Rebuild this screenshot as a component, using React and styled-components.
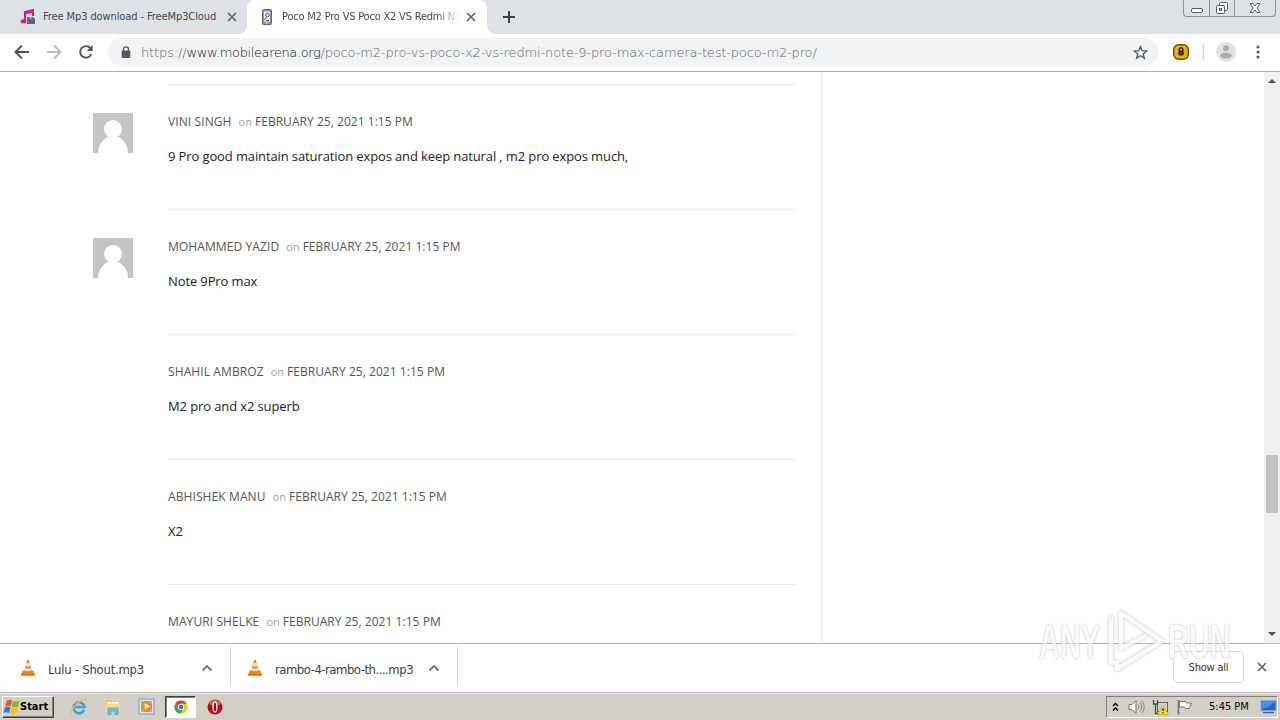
import React from "react";
import styled, { createGlobalStyle, css } from "styled-components";

const comments = [
  { name: "VINI SINGH", text: "9 Pro good maintain saturation expos and keep natural , m2 pro expos much,", avatar: true },
  { name: "MOHAMMED YAZID", text: "Note 9Pro max", avatar: true },
  { name: "SHAHIL AMBROZ", text: "M2 pro and x2 superb" },
  { name: "ABHISHEK MANU", text: "X2" },
  { name: "MAYURI SHELKE", text: "" },
];

const CloseIcon = ({ size = 10, color = "#5f6368" }) => (
  <svg width={size} height={size} viewBox="0 0 10 10">
    <path d="M1 1l8 8M9 1L1 9" stroke={color} strokeWidth="1.7" />
  </svg>
);

const MusicIcon = () => (
  <svg width="16" height="16" viewBox="0 0 16 16">
    <path d="M5 12V3l8-2v6" fill="none" stroke="#e5137d" strokeWidth="2" />
    <path d="M5 3l8-2v2.500l-8 2z" fill="#e5137d" />
    <ellipse cx="3.500" cy="12.300" rx="2.800" ry="2" fill="#e5137d" />
    <path d="M7 8h6l2 2v5H7z" fill="#5d6383" />
    <path d="M9 8h3v2H9z" fill="#9398ad" />
  </svg>
);

const PhoneIcon = () => (
  <svg width="16" height="16" viewBox="0 0 16 16">
    <rect x="3.500" y=".5" width="9" height="15" rx="1" fill="#8797a6" stroke="#5a6875" />
    <rect x="5" y="2.500" width="6" height="10" fill="#e6eff5" />
    <circle cx="8.500" cy="6" r="1.800" fill="none" stroke="#54687b" />
    <path d="M5.500 11l2-3M7 11.500h3" stroke="#54687b" />
    <path d="M6.500 14h3" stroke="#dbe7f0" />
  </svg>
);

const WindowsFlag = () => (
  <svg width="17" height="16" viewBox="0 0 17 16">
    <path d="M3.800 1.500q3-1.500 5.500 0L7.700 7.300q-2.800-1.300-5.500 0z" fill="#ee5a24" />
    <path d="M10 2q3 1.300 6.500-.3L15 7.500q-3.200 1.200-6.300 0z" fill="#7cb82f" />
    <path d="M2 8.200q2.800-1.300 5.500 0L6 14q-2.800-1.300-5.500 0z" fill="#2f7fd6" />
    <path d="M8.400 8.500q3.200 1.200 6.200 0L13 14.300q-3.200 1.300-6.200 0z" fill="#fbbd17" />
  </svg>
);

const ConeIcon = () => (
  <svg width="16" height="17" viewBox="0 0 16 17">
    <path d="M2.500 11.500h11l1.500 5H1z" fill="#f28a10" />
    <path d="M1 15.300h14v1.200H1z" fill="#c96404" />
    <path d="M7.200 1h1.600l3.400 12q-4.200 1.800-8.400 0z" fill="#f0800c" />
    <path d="M6.400 4h3.200l.9 3q-2.500 1-5 0zM5 9q3 1.200 6 0l.8 2.500q-3.800 1.500-7.600 0z" fill="#e3e3e3" />
  </svg>
);

const IeIcon = () => (
  <svg width="18" height="18" viewBox="0 0 18 18">
    <path d="M14.200 11.800A5.500 5.500 0 1 1 14.500 9H5" fill="none" stroke="#3c9fe0" strokeWidth="2.600" />
    <path d="M2 15.500C-.5 12 10 1 15.500 1.500c2 .3 1.200 3 .5 4" fill="none" stroke="#e8bd3d" strokeWidth="1.300" />
  </svg>
);

const FolderIcon = () => (
  <svg width="18" height="18" viewBox="0 0 18 18">
    <path d="M2 2h5l1 1.500h7V14H2z" fill="#e8c760" />
    <path d="M3 4h12v3H3z" fill="#fbf4c8" />
    <path d="M2 6h14v8H2z" fill="#f3db85" />
    <path d="M4 16.500V10h10v6.500h-3V13H7v3.500z" fill="#74bde4" stroke="#4a98c5" strokeWidth=".7" />
  </svg>
);

const MediaIcon = () => (
  <svg width="17" height="17" viewBox="0 0 17 17">
    <rect x="1" y="1" width="15" height="15" fill="#d7e7f5" stroke="#6c9dcb" />
    <rect x="3" y="3" width="11" height="11" fill="#8cb7de" />
    <circle cx="8.500" cy="8.500" r="5.500" fill="#f58a12" />
    <path d="M6.800 5.300l5 3.200-5 3.200z" fill="#fff" />
  </svg>
);

const ChromeIcon = () => (
  <svg width="14" height="14" viewBox="0 0 16 16">
    <circle cx="8" cy="8" r="7.500" fill="#fbc31b" />
    <path d="M1.500 4.250A7.500 7.500 0 0 1 14.500 4.250H8L5 9.500z" fill="#e23e31" />
    <path d="M1.500 4.250A7.500 7.500 0 0 0 8 15.500l3.200-5.800L5 9.700z" fill="#35a351" />
    <circle cx="8" cy="8" r="3.600" fill="#fff" />
    <circle cx="8" cy="8" r="2.800" fill="#3f79d8" />
  </svg>
);

const OperaIcon = () => (
  <svg width="16" height="16" viewBox="0 0 16 16">
    <circle cx="8" cy="8" r="7.500" fill="#b50d12" />
    <path d="M2 5a6.500 6.500 0 0 1 12 0q-6 3-12 0" fill="#db6663" />
    <ellipse cx="8" cy="8" rx="2.600" ry="5.700" fill="#fff" />
    <ellipse cx="8" cy="8" rx="1.200" ry="4.500" fill="#8c0a0c" />
  </svg>
);

function Tabs() {
  return (
    <TabStrip>
      <Tab>
        <MusicIcon />
        <TabTitle>Free Mp3 download - FreeMp3Cloud</TabTitle>
        <CloseIcon />
      </Tab>
      <Tab $active>
        <PhoneIcon />
        <TabTitle $active>Poco M2 Pro VS Poco X2 VS Redmi Note</TabTitle>
        <CloseIcon />
      </Tab>
      <NewTab>
        <svg width="12" height="12" viewBox="0 0 12 12">
          <path d="M6 0v12M0 6h12" stroke="#3c4043" strokeWidth="2" />
        </svg>
      </NewTab>
      <WindowButtons>
        <WindowButton $w={25}>
          <svg width="14" height="16" viewBox="0 0 14 16">
            <rect x="1.500" y="8.500" width="11" height="4" rx="1.500" fill="#fff" stroke="#53565c" />
          </svg>
        </WindowButton>
        <WindowButton $w={25}>
          <svg width="14" height="16" viewBox="0 0 14 16">
            <rect x="4.500" y="2.500" width="8" height="8" rx="1" fill="#fff" stroke="#53565c" />
            <rect x="1.500" y="5.500" width="8" height="8" rx="1" fill="#fff" stroke="#53565c" />
            <rect x="4.500" y="8.500" width="2" height="2" fill="none" stroke="#53565c" />
          </svg>
        </WindowButton>
        <WindowButton $w={41}>
          <svg width="14" height="16" viewBox="0 0 14 16">
            <path d="M2 3.500h3l2 2.500 2-2.500h3L9 8l3 4.500H9L7 10l-2 2.500H2L5 8z" fill="#fff" stroke="#53565c" />
          </svg>
        </WindowButton>
      </WindowButtons>
    </TabStrip>
  );
}

function AddressBar() {
  return (
    <Toolbar>
      <NavButtons>
        <svg width="16" height="16" viewBox="0 0 16 16">
          <path d="M15 8H2M8 1.500L1.500 8 8 14.500" fill="none" stroke="#505357" strokeWidth="1.900" />
        </svg>
        <svg width="16" height="16" viewBox="0 0 16 16">
          <path d="M1 8h13M8 1.500L14.500 8 8 14.500" fill="none" stroke="#b9bbbd" strokeWidth="1.900" />
        </svg>
        <svg width="16" height="16" viewBox="0 0 16 16">
          <path d="M13.300 10.200a5.800 5.800 0 1 1-1-6.200l1 1.200" fill="none" stroke="#505357" strokeWidth="1.900" />
          <path d="M14.700 1v6H8.700z" fill="#505357" />
        </svg>
      </NavButtons>
      <UrlField>
        <svg width="10" height="13" viewBox="0 0 10 13">
          <path d="M2.500 5V3.300a2.500 2.500 0 0 1 5 0V5" fill="none" stroke="#54575b" strokeWidth="1.300" />
          <rect x=".7" y="4.500" width="8.600" height="7.500" rx="1" fill="#54575b" />
        </svg>
        <Url>
          https://<Host>www.mobilearena.org</Host>
          /poco-m2-pro-vs-poco-x2-vs-redmi-note-9-pro-max-camera-test-poco-m2-pro/
        </Url>
        <svg width="15" height="15" viewBox="0 0 15 15">
          <path d="M7.500 1.500l1.700 4.200 4.500.3-3.500 2.900 1.200 4.400-3.900-2.500-3.900 2.500 1.200-4.400L1.300 6l4.500-.3z" fill="none" stroke="#54575b" strokeWidth="1.300" />
        </svg>
      </UrlField>
      <Extension>
        <svg width="16" height="16" viewBox="0 0 16 16">
          <rect x=".7" y=".7" width="14.600" height="14.600" rx="5" fill="#edb50c" stroke="#684b12" strokeWidth="1.400" />
          <path d="M6.200 7V5.500a1.800 1.800 0 0 1 3.600 0V7" fill="none" stroke="#33220c" strokeWidth="1.400" />
          <rect x="5.300" y="6.500" width="5.400" height="5" rx="1.500" fill="#33220c" />
          <path d="M8 8v2" stroke="#d14a20" />
        </svg>
      </Extension>
      <Profile>
        <svg width="20" height="20" viewBox="0 0 20 20">
          <circle cx="10" cy="10" r="10" fill="#e0e1e2" />
          <circle cx="10" cy="6.200" r="3" fill="#a9abad" />
          <ellipse cx="10" cy="13.600" rx="5.800" ry="2.900" fill="#a9abad" />
        </svg>
      </Profile>
      <svg width="4" height="14" viewBox="0 0 4 14">
        <circle cx="2" cy="2" r="1.500" fill="#505357" />
        <circle cx="2" cy="7" r="1.500" fill="#505357" />
        <circle cx="2" cy="12" r="1.500" fill="#505357" />
      </svg>
    </Toolbar>
  );
}

function Comment({ name, text, avatar }) {
  return (
    <CommentRow>
      <AvatarCell>
        {avatar && (
          <svg width="40" height="40" viewBox="0 0 40 40">
            <rect width="40" height="40" fill="#c4c4c4" />
            <circle cx="20" cy="16" r="9" fill="#fff" />
            <path d="M5 40q0-10 9-16h12q9 6 9 16z" fill="#fff" />
          </svg>
        )}
      </AvatarCell>
      <CommentBody>
        <Meta>
          <Author>{name}</Author>
          <On>on</On>
          <Posted>FEBRUARY 25, 2021 1:15 PM</Posted>
        </Meta>
        <CommentText>{text}</CommentText>
      </CommentBody>
    </CommentRow>
  );
}

function Download({ name, first }) {
  return (
    <DownloadItem $first={first}>
      <ConeIcon />
      <FileName $first={first}>{name}</FileName>
      <svg width="12" height="8" viewBox="0 0 12 8">
        <path d="M1.500 6.500L6 2l4.500 4.500" fill="none" stroke="#707276" strokeWidth="1.800" />
      </svg>
    </DownloadItem>
  );
}

function Taskbar() {
  return (
    <Bar>
      <StartButton>
        <WindowsFlag />
        Start
      </StartButton>
      <QuickItem><IeIcon /></QuickItem>
      <QuickItem><FolderIcon /></QuickItem>
      <QuickItem><MediaIcon /></QuickItem>
      <QuickItem $pressed><ChromeIcon /></QuickItem>
      <QuickItem><OperaIcon /></QuickItem>
      <Tray>
        <svg width="7" height="10" viewBox="0 0 7 10">
          <path d="M1 4l2.500-2.500L6 4M1 8.500L3.500 6 6 8.500" fill="none" stroke="#000" strokeWidth="1.400" />
        </svg>
        <TrayIcons>
          <svg width="17" height="16" viewBox="0 0 17 16">
            <path d="M1 5.500h3l4-4v13l-4-4H1z" fill="#f9f9f9" stroke="#737373" />
            <path d="M10 5.500q2 2.500 0 5M12 3.500q3.500 4.500 0 9M14 2q4.500 6 0 12" fill="none" stroke="#858585" />
          </svg>
          <svg width="17" height="16" viewBox="0 0 17 16">
            <rect x="5.500" y="3.500" width="10" height="9" fill="#c9cfd2" stroke="#606060" />
            <path d="M1.500 1v4h4V1M3.500 5v9.500H7" fill="none" stroke="#484848" strokeWidth="1.300" />
            <path d="M11 6l5.500 9.500h-11z" fill="#ffd629" stroke="#c19b0d" strokeWidth=".6" />
            <path d="M11 9v3M11 13v1.300" stroke="#222" strokeWidth="1.200" />
          </svg>
          <svg width="17" height="16" viewBox="0 0 17 16">
            <path d="M2.500 1v14.500" stroke="#777" strokeWidth="1.800" />
            <path d="M3.500 2.500h6l1 1.500h5l-2 5.500H9.500l-1-1.500h-5z" fill="#fafafa" stroke="#777" />
          </svg>
        </TrayIcons>
        <Clock>5:45 PM</Clock>
        <svg width="17" height="15" viewBox="0 0 17 15">
          <rect x="1" y="1.500" width="15" height="10" fill="#2467bd" stroke="#80a7d2" />
          <path d="M1.500 2h14L8 8 1.500 10z" fill="#4990dc" />
          <path d="M3 13.500h11" stroke="#315e96" strokeWidth="1.500" />
        </svg>
      </Tray>
    </Bar>
  );
}

function App() {
  return (
    <>
      <GlobalStyle />
      <Screen>
        <Tabs />
        <AddressBar />
        <Viewport>
          <Page>
            {comments.map((c) => (
              <Comment key={c.name} {...c} />
            ))}
          </Page>
          <Sidebar />
          <Scrollbar>
            <Arrow viewBox="0 0 8 4"><path d="M0 4l4-4 4 4z" fill="#505050" /></Arrow>
            <Thumb />
            <Arrow viewBox="0 0 8 4"><path d="M0 0l4 4 4-4z" fill="#505050" /></Arrow>
          </Scrollbar>
        </Viewport>
        <Shelf>
          <Download name="Lulu - Shout.mp3" first />
          <Download name="rambo-4-rambo-th....mp3" />
          <ShowAll>Show all</ShowAll>
          <CloseIcon />
        </Shelf>
        <Taskbar />
        <Watermark>
          <MarkText $w={63}>ANY</MarkText>
          <Play width="60" height="66" viewBox="0 0 60 66">
            <path d="M6 8.500v46h6v6.500L57 33 16 5v35l26-13" fill="none" stroke="#fafafa" strokeWidth="4.500" strokeLinejoin="round" />
          </Play>
          <MarkText $w={64}>RUN</MarkText>
        </Watermark>
      </Screen>
    </>
  );
}

export default App;

const GlobalStyle = createGlobalStyle`
  * { box-sizing: border-box; }
  body { margin: 0; overflow: hidden; background: #fff; }
  svg { display: block; flex-shrink: 0; }
`;

const ui = css`
  font-family: "DejaVu Sans Condensed", "DejaVu Sans", sans-serif;
  font-stretch: condensed;
`;

const Screen = styled.div`
  position: relative;
  display: flex;
  flex-direction: column;
  width: 1280px;
  height: 720px;
  overflow: hidden;
  ${ui}
`;

const TabStrip = styled.div`
  display: flex;
  height: 34px;
  padding-left: 7px;
  background: #dee1e6;
`;

const Tab = styled.div`
  position: relative;
  display: flex;
  align-items: center;
  gap: 7px;
  width: 240px;
  height: 34px;
  padding: 0 ${(p) => (p.$active ? 11 : 10)}px 0 ${(p) => (p.$active ? 12 : 13)}px;
  border-radius: 8px 8px 0 0;
  background: ${(p) => (p.$active ? "#fff" : "transparent")};
  ${(p) =>
    p.$active &&
    css`
      &::before,
      &::after {
        content: "";
        position: absolute;
        bottom: 0;
        width: 8px;
        height: 8px;
      }
      &::before {
        left: -8px;
        background: radial-gradient(circle at 0 0, #dee1e6 7.5px, #fff 8px);
      }
      &::after {
        right: -8px;
        background: radial-gradient(circle at 100% 0, #dee1e6 7.5px, #fff 8px);
      }
    `}
`;

const TabTitle = styled.div`
  flex: 1;
  overflow: hidden;
  white-space: nowrap;
  font-size: 11px;
  line-height: 18px;
  letter-spacing: ${(p) => (p.$active ? -0.2 : -0.1)}px;
  color: #45484c;
  ${(p) => p.$active && "mask-image: linear-gradient(90deg, #000 88%, transparent);"}
`;

const NewTab = styled.div`
  display: flex;
  align-items: center;
  padding-left: 16px;
`;

const WindowButtons = styled.div`
  display: flex;
  height: 17px;
  margin-left: auto;
  margin-right: 4px;
  border: 1px solid #8b8f96;
  border-top: 0;
  border-radius: 0 0 4px 4px;
`;

const WindowButton = styled.div`
  display: flex;
  justify-content: center;
  width: ${(p) => p.$w}px;
  & + & {
    border-left: 1px solid #8b8f96;
  }
`;

const Toolbar = styled.div`
  display: flex;
  align-items: center;
  height: 38px;
  padding: 0 20px 1px 14px;
  border-bottom: 1px solid #adaeb0;
  background: #fff;
`;

const NavButtons = styled.div`
  display: flex;
  gap: 16px;
  width: 94px;
`;

const UrlField = styled.div`
  display: flex;
  align-items: center;
  width: 1051px;
  height: 28px;
  padding: 0 11px 0 13px;
  border-radius: 14px;
  background: #f1f3f4;
`;

const Url = styled.div`
  flex: 1;
  padding-left: 10px;
  white-space: nowrap;
  font-family: "DejaVu Sans", sans-serif;
  font-weight: 200;
  font-size: 13px;
  letter-spacing: -0.14px;
  color: #5f6368;
`;

const Host = styled.span`
  letter-spacing: -0.38px;
  color: #111;
`;

const Extension = styled.div`
  display: flex;
  align-items: center;
  width: 31px;
  height: 16px;
  margin-left: 14px;
  margin-right: 12px;
  border-right: 1px solid #d0d2d4;
`;

const Profile = styled.div`
  width: 40px;
`;

const Viewport = styled.div`
  display: flex;
  height: 571px;
  overflow: hidden;
  background: #fff;
`;

const Page = styled.div`
  width: 822px;
  padding: 12px 26px 0 93px;
  border-right: 1px solid #ebebeb;
`;

const Sidebar = styled.div`
  flex: 1;
`;

const CommentRow = styled.div`
  display: flex;
  height: 125px;
`;

const AvatarCell = styled.div`
  width: 75px;
  padding-top: 29px;
`;

const CommentBody = styled.div`
  flex: 1;
  padding-top: 27px;
  border-top: 1px solid #ececec;
  font-family: "Open Sans", "Noto Sans", sans-serif;
  font-stretch: normal;
`;

const Meta = styled.div`
  display: flex;
  align-items: baseline;
  white-space: nowrap;
  font-size: 12px;
  line-height: 20px;
  color: #555;
`;

const Author = styled.span`
  letter-spacing: 0.1px;
`;

const Posted = styled.span`
  letter-spacing: 0.04px;
`;

const On = styled.span`
  margin: 0 3px 0 7px;
  font-size: 11px;
  color: #a0a0a0;
`;

const CommentText = styled.div`
  padding-top: 14px;
  white-space: nowrap;
  font-size: 13px;
  line-height: 20px;
  letter-spacing: -0.115px;
  color: #222;
`;

const Scrollbar = styled.div`
  display: flex;
  flex-direction: column;
  align-items: center;
  width: 16px;
  padding: 7px 0;
  background: #f1f1f1;
`;

const Arrow = styled.svg`
  width: 8px;
  height: 4px;
`;

const Thumb = styled.div`
  width: 12px;
  height: 58px;
  margin-top: 372px;
  margin-bottom: auto;
  background: #c1c1c1;
`;

const Shelf = styled.div`
  display: flex;
  align-items: center;
  height: 50px;
  padding: 0 13px 2px 0;
  border-top: 1px solid #adaeb0;
  border-bottom: 1px solid #b9b7b3;
  background: #fff;
`;

const DownloadItem = styled.div`
  display: flex;
  align-items: center;
  width: ${(p) => (p.$first ? 231 : 227)}px;
  height: 40px;
  padding: 1px 17px 0 ${(p) => (p.$first ? 20 : 16)}px;
  border-right: 1px solid #d2d2d4;
`;

const FileName = styled.div`
  flex: 1;
  padding: 3px 0 0 12px;
  white-space: nowrap;
  font-size: 13px;
  letter-spacing: ${(p) => (p.$first ? -0.25 : -0.5)}px;
  color: #3c4043;
`;

const ShowAll = styled.div`
  display: flex;
  align-items: center;
  justify-content: center;
  width: 71px;
  height: 32px;
  margin-left: auto;
  margin-right: 13px;
  border: 1px solid #d8dadd;
  border-radius: 4px;
  font-size: 11px;
  letter-spacing: -0.2px;
  color: #333;
`;

const Bar = styled.div`
  display: flex;
  align-items: center;
  height: 27px;
  padding: 0 2px 1px;
  border-top: 1px solid #efedea;
  background: #d4d0c8;
`;

const StartButton = styled.div`
  display: flex;
  align-items: center;
  width: 52px;
  height: 22px;
  margin-right: 9px;
  border: 1px solid;
  border-color: #fff #404040 #404040 #fff;
  box-shadow: inset -1px -1px 0 #808080;
  font-size: 11px;
  font-weight: bold;
  color: #000;
`;

const QuickItem = styled.div`
  display: flex;
  align-items: center;
  justify-content: center;
  width: 31px;
  height: 22px;
  margin-right: 3px;
  border: 1px solid transparent;
  ${(p) =>
    p.$pressed &&
    css`
      border-color: #404040 #fff #fff #404040;
      box-shadow: inset 1px 1px 0 #808080;
      background: #fff;
    `}
`;

const Tray = styled.div`
  display: flex;
  align-items: center;
  width: 172px;
  height: 22px;
  margin-left: auto;
  padding-left: 5px;
  border: 1px solid;
  border-color: #808080 #fff #fff #808080;
`;

const TrayIcons = styled.div`
  display: flex;
  gap: 7px;
  margin-left: 9px;
`;

const Clock = styled.div`
  flex: 1;
  padding-left: 16px;
  white-space: nowrap;
  font-size: 11px;
  color: #000;
`;

// translucent brand mark laid over the lower right corner
const Watermark = styled.div`
  position: absolute;
  left: 1039px;
  top: 608px;
  display: flex;
  align-items: center;
  gap: 3px;
  opacity: 0.8;
`;

const Play = styled.svg`
  overflow: visible;
  filter: drop-shadow(0 0 1.5px #aaa);
`;

const MarkText = styled.div`
  width: ${(p) => p.$w}px;
  font-family: "Liberation Sans", sans-serif;
  font-size: 49px;
  font-weight: bold;
  line-height: 66px;
  color: #fafafa;
  text-shadow: 0 0 2px #b5b5b5, 0 0 3px #ccc;
  transform: scaleX(0.59);
  transform-origin: 0 50%;
`;
